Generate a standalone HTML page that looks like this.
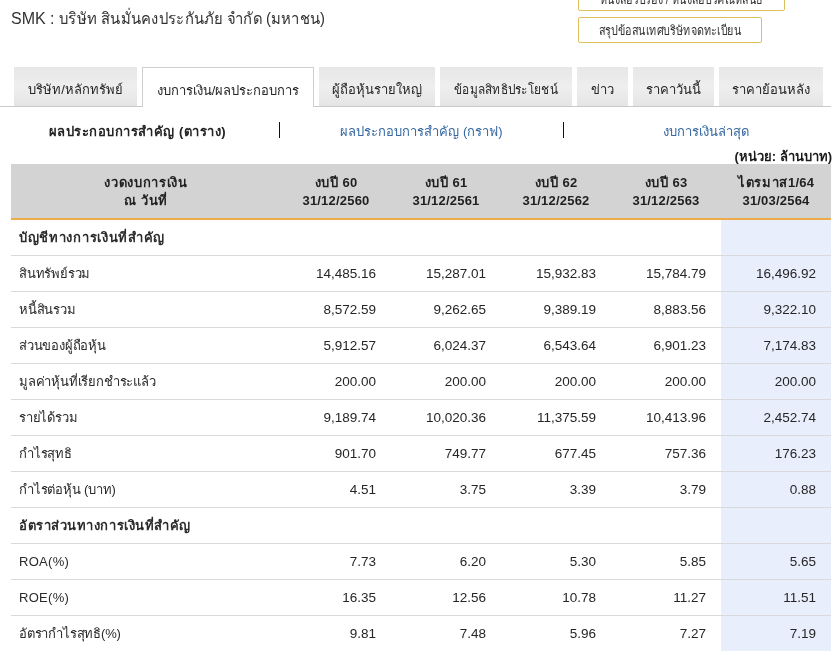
<!DOCTYPE html>
<html><head><meta charset="utf-8">
<style>
*{box-sizing:border-box;margin:0;padding:0}
html,body{width:835px;height:651px;overflow:hidden;background:#fff}
body{will-change:transform}
body{font-family:"Liberation Sans",sans-serif;color:#333;position:relative}
.abs{position:absolute;white-space:nowrap}
.title{left:11px;top:9px;font-size:16px;line-height:20px;color:#333}
.btn{position:absolute;border:1px solid #dfbf5c;border-radius:2px;background:#fff;font-size:13px;color:#333;text-align:center;white-space:nowrap;overflow:hidden}
.tabline{position:absolute;left:0;top:106px;width:831px;height:1px;background:#cacaca}
.tab{position:absolute;top:67px;height:39px;color:#262626;background:linear-gradient(#e7e7e7,#eeeeee 50%,#e5e5e5);font-size:13px;line-height:46px;text-align:center;white-space:nowrap}
.tab span{display:inline-block}
.tab.act{background:#fff;border:1px solid #cfcfcf;border-bottom:none;height:40px;left:142px;width:172px}
.sub{position:absolute;top:123px;font-size:13px;line-height:18px;white-space:nowrap;text-align:center}
.sep{position:absolute;top:122px;width:1px;height:16px;background:#111}
.unit{position:absolute;right:3px;top:149px;font-size:13px;line-height:16px;color:#1a1a1a;font-weight:600}
table{position:absolute;left:11px;top:164px;border-collapse:collapse;table-layout:fixed;width:820px}
td,th{font-size:13px;color:#1f1f1f}
td{font-size:13.5px;color:#262626}
td.l{font-size:13px;color:#2a2a2a}
th{background:#d3d3d3;height:55px;font-weight:bold;text-align:center;line-height:18px;border-bottom:2px solid #eeac48;padding-top:2px}
td{height:36px;border-bottom:1px solid #d9d9d9;text-align:right;padding-right:15px}
td.l{text-align:left;padding-left:8px;padding-right:0}
td.h{font-weight:bold;letter-spacing:0.5px}
th{letter-spacing:0.2px}
th .t{letter-spacing:0.7px}
td.l{letter-spacing:-0.2px}
td.l.h{letter-spacing:0.55px}
td.l.e{letter-spacing:0.3px}
td.q{background:#e8eefb}
</style></head><body>
<div class="abs title">SMK : <span style="display:inline-block;transform:scaleX(0.927);transform-origin:0 50%">บริษัท สินมั่นคงประกันภัย จำกัด (มหาชน)</span></div>
<div class="btn" style="left:578px;top:-20px;width:207px;height:31px;line-height:37px"><span style="display:inline-block;transform:scaleX(0.83)">หนังสือรับรอง / หนังสือบริคณห์สนธิ</span></div>
<div class="btn" style="left:578px;top:17px;width:184px;height:26px;line-height:26px"><span style="display:inline-block;transform:scaleX(0.83)">สรุปข้อสนเทศบริษัทจดทะเบียน</span></div>

<div class="tabline"></div>
<div class="tab" style="left:14px;width:123px">บริษัท/หลักทรัพย์</div>
<div class="tab act">งบการเงิน/ผลประกอบการ</div>
<div class="tab" style="left:319px;width:116px">ผู้ถือหุ้นรายใหญ่</div>
<div class="tab" style="left:440px;width:132px"><span style="transform:scaleX(0.91)">ข้อมูลสิทธิประโยชน์</span></div>
<div class="tab" style="left:577px;width:51px">ข่าว</div>
<div class="tab" style="left:633px;width:81px">ราคาวันนี้</div>
<div class="tab" style="left:719px;width:104px">ราคาย้อนหลัง</div>

<div class="sub" style="left:0;width:275px;font-weight:bold;color:#222;letter-spacing:0.5px">ผลประกอบการสำคัญ (ตาราง)</div>
<div class="sep" style="left:279px"></div>
<div class="sub" style="left:284px;width:275px;color:#3668a2">ผลประกอบการสำคัญ (กราฟ)</div>
<div class="sep" style="left:563px"></div>
<div class="sub" style="left:568px;width:275px;color:#3668a2">งบการเงินล่าสุด</div>
<div class="unit">(หน่วย: ล้านบาท)</div>

<table>
<colgroup><col style="width:270px"><col style="width:110px"><col style="width:110px"><col style="width:110px"><col style="width:110px"><col style="width:110px"></colgroup>
<tr><th><span class="t">งวดงบการเงิน</span><br><span class="t">ณ วันที่</span></th><th><span class="t">งบปี</span> 60<br>31/12/2560</th><th><span class="t">งบปี</span> 61<br>31/12/2561</th><th><span class="t">งบปี</span> 62<br>31/12/2562</th><th><span class="t">งบปี</span> 63<br>31/12/2563</th><th><span class="t">ไตรมาส</span>1/64<br>31/03/2564</th></tr>
<tr><td class="l h" style="letter-spacing:0.7px">บัญชีทางการเงินที่สำคัญ</td><td></td><td></td><td></td><td></td><td class="q"></td></tr>
<tr><td class="l">สินทรัพย์รวม</td><td>14,485.16</td><td>15,287.01</td><td>15,932.83</td><td>15,784.79</td><td class="q">16,496.92</td></tr>
<tr><td class="l">หนี้สินรวม</td><td>8,572.59</td><td>9,262.65</td><td>9,389.19</td><td>8,883.56</td><td class="q">9,322.10</td></tr>
<tr><td class="l">ส่วนของผู้ถือหุ้น</td><td>5,912.57</td><td>6,024.37</td><td>6,543.64</td><td>6,901.23</td><td class="q">7,174.83</td></tr>
<tr><td class="l">มูลค่าหุ้นที่เรียกชำระแล้ว</td><td>200.00</td><td>200.00</td><td>200.00</td><td>200.00</td><td class="q">200.00</td></tr>
<tr><td class="l">รายได้รวม</td><td>9,189.74</td><td>10,020.36</td><td>11,375.59</td><td>10,413.96</td><td class="q">2,452.74</td></tr>
<tr><td class="l">กำไรสุทธิ</td><td>901.70</td><td>749.77</td><td>677.45</td><td>757.36</td><td class="q">176.23</td></tr>
<tr><td class="l">กำไรต่อหุ้น (บาท)</td><td>4.51</td><td>3.75</td><td>3.39</td><td>3.79</td><td class="q">0.88</td></tr>
<tr><td class="l h">อัตราส่วนทางการเงินที่สำคัญ</td><td></td><td></td><td></td><td></td><td class="q"></td></tr>
<tr><td class="l e">ROA(%)</td><td>7.73</td><td>6.20</td><td>5.30</td><td>5.85</td><td class="q">5.65</td></tr>
<tr><td class="l e">ROE(%)</td><td>16.35</td><td>12.56</td><td>10.78</td><td>11.27</td><td class="q">11.51</td></tr>
<tr><td class="l">อัตรากำไรสุทธิ(%)</td><td>9.81</td><td>7.48</td><td>5.96</td><td>7.27</td><td class="q">7.19</td></tr>
</table>
</body></html>
